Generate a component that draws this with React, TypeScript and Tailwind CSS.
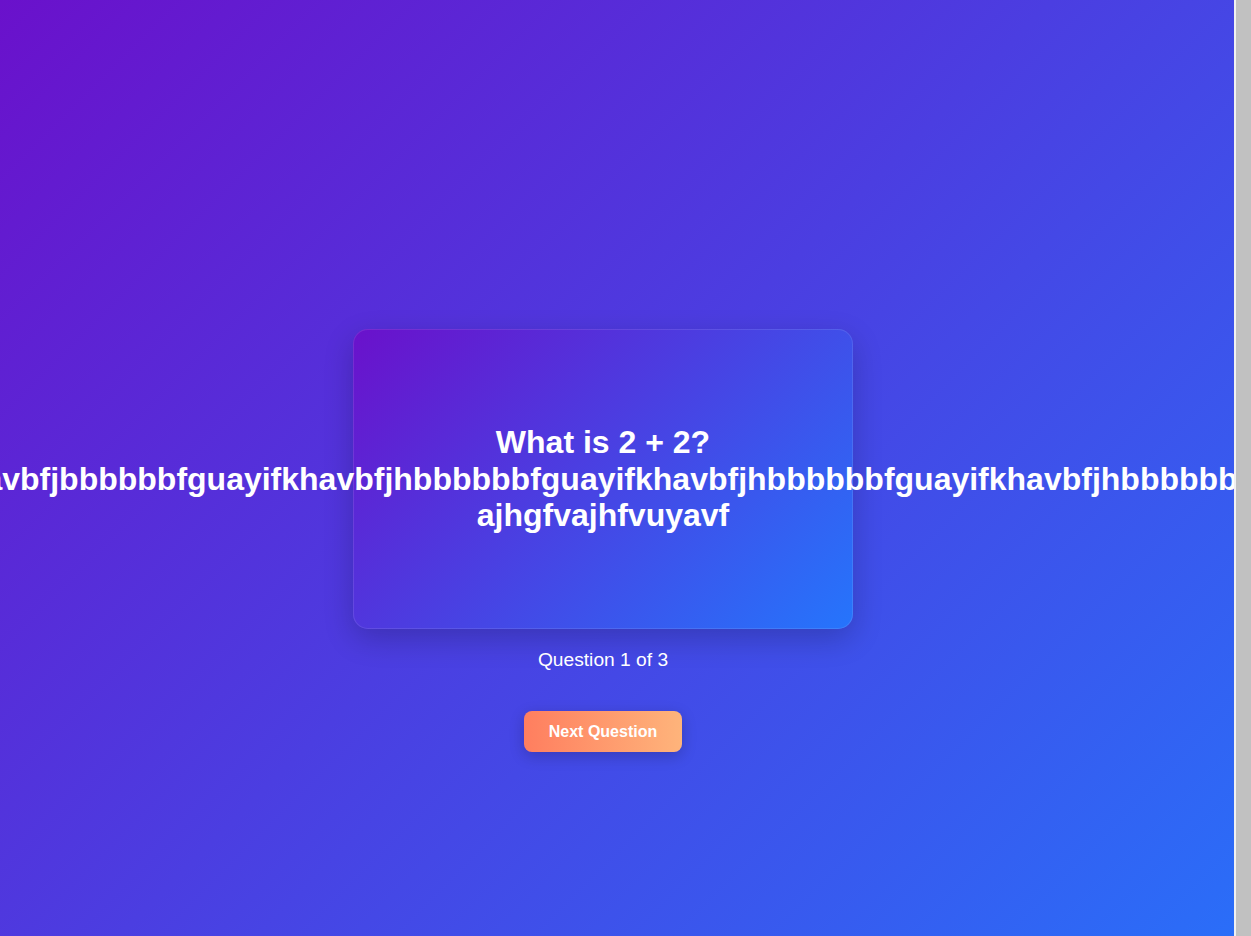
const longWord =
  "kjjfavbfjbbbbbbfguayifkhavbfjhbbbbbbfguayifkhavbfjhbbbbbbfguayifkhavbfjhbbbbbbfg";

export default function App() {
  return (
    <div className="flex h-screen font-['Liberation_Sans',Arial,sans-serif] text-white">
      <main className="flex flex-1 flex-col items-center justify-center overflow-hidden bg-[linear-gradient(135deg,#6a11cb_0%,#2575fc_108%)] pt-[145px] pr-[28px]">
        <div className="flex h-[300px] w-[500px] shrink-0 flex-col items-center justify-center rounded-[15px] border border-white/10 bg-[linear-gradient(135deg,#6a11cb_0%,#2575fc_100%)] bg-origin-border p-5 text-center shadow-[0_10px_30px_rgba(0,0,0,0.2)]">
          <h2 className="text-[32px] font-bold leading-[1.15]">
            What is 2 + 2? {longWord} ajhgfvajhfvuyavf
          </h2>
        </div>
        <p className="mt-5 text-[1.2rem] leading-[1.15]">Question 1 of 3</p>
        <button className="mt-10 rounded-lg bg-[linear-gradient(to_right,#ff7e5f,#feb47b)] px-[25px] py-[11px] text-base font-bold leading-[19px] text-white shadow-[0_4px_15px_rgba(0,0,0,0.2)]">
          Next Question
        </button>
      </main>
      {/* scrollbar */}
      <div className="w-[17px] shrink-0 border-l-2 border-[#f1f1f1] bg-[#c1c1c1]" />
    </div>
  );
}
